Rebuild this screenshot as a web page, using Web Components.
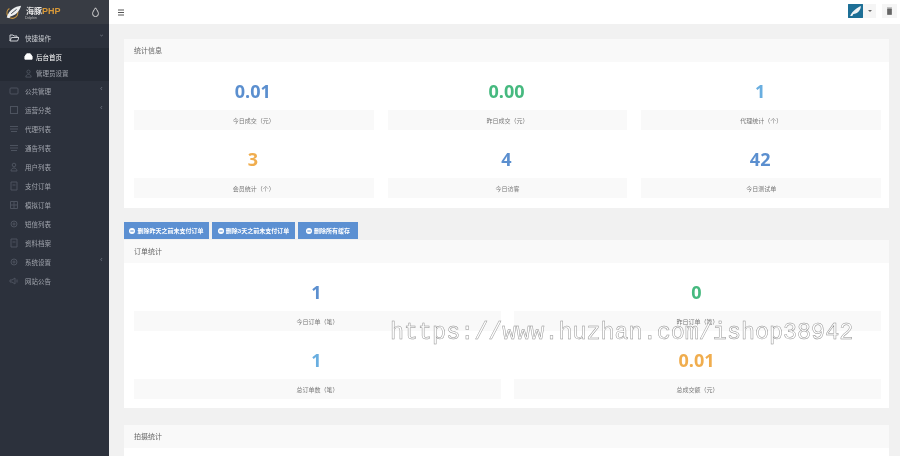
<!DOCTYPE html>
<html>
<head>
<meta charset="utf-8">
<style>
html,body{margin:0;padding:0;height:456px;overflow:hidden;background:#f1f1f1;}
body{font-family:"Liberation Sans","Noto Sans CJK SC",sans-serif;}
</style>
</head>
<body>
<admin-app>
  <side-nav slot="side"></side-nav>
  <top-bar slot="top"></top-bar>
  <panel-card title="统计信息" style="height:169px">
    <stat-grid cols="3">
      <stat-box value="0.01" label="今日成交（元）" color="#5b8fcf"></stat-box>
      <stat-box value="0.00" label="昨日成交（元）" color="#46b97f"></stat-box>
      <stat-box value="1" label="代理统计（个）" color="#69aee0"></stat-box>
      <stat-box value="3" label="会员统计（个）" color="#f0ad4e"></stat-box>
      <stat-box value="4" label="今日访客" color="#5b8fcf"></stat-box>
      <stat-box value="42" label="今日测试单" color="#5b8fcf"></stat-box>
    </stat-grid>
  </panel-card>
  <action-bar>
    <action-button style="width:85px">删除昨天之前未支付订单</action-button>
    <action-button style="width:83px">删除3天之前未支付订单</action-button>
    <action-button style="width:60px">删除所有缓存</action-button>
  </action-bar>
  <panel-card title="订单统计" style="height:168px">
    <stat-grid cols="2">
      <stat-box value="1" label="今日订单（笔）" color="#5b8fcf"></stat-box>
      <stat-box value="0" label="昨日订单（笔）" color="#46b97f"></stat-box>
      <stat-box value="1" label="总订单数（笔）" color="#69aee0"></stat-box>
      <stat-box value="0.01" label="总成交额（元）" color="#f0ad4e"></stat-box>
    </stat-grid>
  </panel-card>
  <panel-card title="拍摄统计" style="height:60px;margin-top:17px"></panel-card>
  <water-mark slot="over">https://www.huzhan.com/ishop38942</water-mark>
</admin-app>

<script>
const sansStack = '"Liberation Sans","Noto Sans CJK SC",sans-serif';

class AdminApp extends HTMLElement{
    constructor(){
        super();
        this.attachShadow({mode:'open'});
        this.shadowRoot.innerHTML = `
<style>
:host{display:grid;grid-template-columns:109px 1fr;grid-template-rows:24px 1fr;width:900px;height:456px;overflow:hidden;position:relative;background:#f1f1f1;filter:blur(.35px);}
.side{grid-row:1 / 3;}
main{padding:15px 11px 0 15px;overflow:hidden;}
</style>
<div class="side"><slot name="side"></slot></div>
<slot name="top"></slot>
<main><slot></slot></main>
<slot name="over"></slot>
`;
    }
}

class SideNav extends HTMLElement{
    constructor(){
        super();
        this.attachShadow({mode:'open'});
        const items = [
            ['box','公共管理',1],['tag','运营分类',1],['list','代理列表'],['list','通告列表'],
            ['user','用户列表'],['doc','支付订单'],['grid','模拟订单'],['gear','短信列表'],
            ['doc','资料档案'],['gear','系统设置',1],['horn','网站公告']
        ];
        const icons = {
            box:'<rect x="1" y="2" width="8" height="6" rx="1"/>',
            tag:'<rect x="1.5" y="1.5" width="7" height="7"/>',
            list:'<path d="M1 2.5h8M1 5h8M2 7.5h6"/>',
            user:'<circle cx="5" cy="3" r="1.8"/><path d="M2 9c0-4 6-4 6 0z"/>',
            doc:'<path d="M2 1h6v8H2zM3.5 4h3"/>',
            grid:'<path d="M1.5 1.5h7v7h-7zM1.5 5h7M5 1.5v7"/>',
            gear:'<circle cx="5" cy="5" r="3"/><circle cx="5" cy="5" r="1"/>',
            horn:'<path d="M1 4v2h2l3 2V2L3 4zM8 3.5v3"/>'
        };
        const row = ([ic,t,arrow]) => `<div class="row"><svg viewBox="0 0 10 10">${icons[ic]}</svg><span>${t}</span>${arrow?'<i>‹</i>':''}</div>`;
        this.shadowRoot.innerHTML = `
<style>
:host{display:flex;flex-direction:column;width:109px;height:456px;background:#2c313c;color:#a0a4ac;font:6.5px ${sansStack};}
.brand{height:24px;background:#383c44;display:flex;align-items:flex-start;padding:3px 0 0 4px;box-sizing:border-box;gap:2px;position:relative;}
.brand .logo{margin-right:2px;}
.brand b{font:bold 8px/10px ${sansStack};color:#e6e6e6;margin-top:3px;}
.brand b em{font-style:normal;color:#d99a3a;font-size:9px;}
.brand small{position:absolute;left:25px;top:15.500px;font-size:3.500px;line-height:4px;color:#bbb;}
.brand .drop{position:absolute;left:91px;top:7px;width:9px;height:10px;}
nav{padding-top:4px;}
.row{height:19px;display:flex;align-items:center;padding-left:9px;position:relative;}
.row svg{width:10px;height:10px;margin-right:6px;fill:none;stroke:#4d535f;stroke-width:1;flex:none;}
.row span{white-space:nowrap;}
.row i{position:absolute;left:100px;top:3px;font-style:normal;color:#6a707b;font-size:8px;}
.head{color:#c9ccd1;height:20px;}
.head svg{stroke:#c9ccd1;}
.head i{transform:rotate(-90deg);}
.sub{background:#252a34;}
.sub .row{padding-left:24px;height:17px;}
.sub .row + .row{height:16px;}
.sub svg{margin-right:3px;width:9px;height:9px;}
.on{color:#fff;}
.on svg{stroke:#fff;fill:#fff;}
</style>
<div class="brand">
  <svg class="logo" width="18" height="18" viewBox="0 0 20 20"><path d="M15 9a6 6 0 1 1-9-3" fill="none" stroke="#c8953f" stroke-width="1.3"/><path d="M3 16C6 7 12 4 19 3c-2 7-7 11-12 12l-1 2z" fill="#eceef0"/><path d="M8 12l6-5" stroke="#2c3340"/></svg>
  <b>海豚<em>PHP</em></b><small>Dolphin</small>
  <svg class="drop" viewBox="0 0 10 12"><path d="M5 1C3 4 1.5 6 1.5 8a3.5 3.5 0 0 0 7 0C8.500 6 7 4 5 1z" fill="none" stroke="#d8d8d8" stroke-width="1.2"/></svg>
</div>
<nav>
  <div class="row head"><svg viewBox="0 0 10 10"><path d="M1 8V2h3l1 1h3v1.500M1 8l1.500-3.500H10L8.500 8z"/></svg><span>快捷操作</span><i>‹</i></div>
  <div class="sub">
    <div class="row on"><svg viewBox="0 0 10 10"><path d="M1 5l2-3h4l2 3v3H1z"/></svg><span>后台首页</span></div>
    <div class="row"><svg viewBox="0 0 10 10"><circle cx="5" cy="3" r="1.800"/><path d="M2 9c0-4 6-4 6 0z"/></svg><span>管理员设置</span></div>
  </div>
  ${items.map(row).join('')}
</nav>
`;
    }
}

class TopBar extends HTMLElement{
    constructor(){
        super();
        this.attachShadow({mode:'open'});
        this.shadowRoot.innerHTML = `
<style>
:host{display:flex;align-items:center;height:24px;background:#fff;padding:0 3px 0 8px;box-sizing:border-box;}
.menu{width:8px;height:7px;}
.space{flex:1;}
.tools{display:flex;align-items:center;margin-top:-3px;}
.avatar{width:15px;height:14px;background:#1d6f96;border-radius:1px;display:block;}
.btn{height:14px;background:#f5f5f5;display:flex;align-items:center;justify-content:center;}
.caret{width:13px;margin-right:6px;}
.caret:after{content:"";border:2px solid transparent;border-top-color:#666;margin-top:2px;}
.trash{width:15px;}
</style>
<svg class="menu" viewBox="0 0 8 7"><path d="M1 1h6M1 3.500h6M1 6h6" stroke="#555" stroke-width="1"/></svg>
<div class="space"></div>
<div class="tools">
<svg class="avatar" viewBox="0 0 14 14" preserveAspectRatio="none"><rect width="14" height="14" fill="#1d6f96"/><path d="M2 12C4 7 8 4 12 2c0 4-3 8-7 8l-1 2z" fill="#eef2f4"/></svg>
<div class="btn caret"></div>
<div class="btn trash"><svg width="7" height="8" viewBox="0 0 7 8"><path d="M1 1h5M1.500 2h4v5.500h-4z" fill="#666" stroke="#666" stroke-width=".7"/></svg></div>
</div>
`;
    }
}

class PanelCard extends HTMLElement{
    constructor(){
        super();
        this.attachShadow({mode:'open'});
        this.shadowRoot.innerHTML = `
<style>
:host{display:flex;flex-direction:column;width:765px;background:#fff;box-sizing:border-box;overflow:hidden;}
header{height:23px;flex:none;background:#f9f9f9;display:flex;align-items:center;padding:0 0 2px 10px;box-sizing:border-box;font:7px ${sansStack};color:#666;}
.body{flex:1;padding:0 8px 0 10px;}
</style>
<header></header>
<div class="body"><slot></slot></div>
`;
        this.shadowRoot.querySelector('header').textContent = this.getAttribute('title');
        this.removeAttribute('title');
    }
}

class StatGrid extends HTMLElement{
    constructor(){
        super();
        this.attachShadow({mode:'open'});
        const cols = this.getAttribute('cols');
        this.shadowRoot.innerHTML = `
<style>
:host{display:grid;grid-template-columns:repeat(${cols},1fr);column-gap:${cols=='3'?14:13}px;}
</style>
<slot></slot>
`;
    }
}

class StatBox extends HTMLElement{
    constructor(){
        super();
        this.attachShadow({mode:'open'});
        this.shadowRoot.innerHTML = `
<style>
:host{display:flex;flex-direction:column;height:68px;min-width:0;}
.num{height:48px;display:flex;align-items:center;justify-content:center;padding:10px 2px 0 0;box-sizing:border-box;font:bold 18px "Open Sans",${sansStack};}
.lab{height:20px;background:#f9f9f9;display:flex;align-items:center;justify-content:center;font:6px ${sansStack};color:#777;}
</style>
<div class="num"></div>
<div class="lab"></div>
`;
        const num = this.shadowRoot.querySelector('.num');
        num.textContent = this.getAttribute('value');
        num.style.color = this.getAttribute('color');
        this.shadowRoot.querySelector('.lab').textContent = this.getAttribute('label');
    }
}

class ActionBar extends HTMLElement{
    constructor(){
        super();
        this.attachShadow({mode:'open'});
        this.shadowRoot.innerHTML = `
<style>
:host{display:flex;gap:3px;height:18px;margin-top:14px;}
</style>
<slot></slot>
`;
    }
}

class ActionButton extends HTMLElement{
    constructor(){
        super();
        this.attachShadow({mode:'open'});
        this.shadowRoot.innerHTML = `
<style>
:host{display:flex;align-items:center;justify-content:center;height:17px;background:#5c90d2;color:#fff;font:bold 6px ${sansStack};white-space:nowrap;gap:2px;box-sizing:border-box;}
svg{width:6px;height:6px;flex:none;}
</style>
<svg viewBox="0 0 6 6"><circle cx="3" cy="3" r="3" fill="#fff"/><rect x="1.300" y="2.500" width="3.400" height="1" fill="#5c90d2"/></svg>
<slot></slot>
`;
    }
}

class WaterMark extends HTMLElement{
    constructor(){
        super();
        this.attachShadow({mode:'open'});
        this.shadowRoot.innerHTML = `
<style>
:host{position:absolute;left:390px;top:320px;font:23.400px "Liberation Mono",monospace;color:rgba(255,255,255,.8);-webkit-text-stroke:.45px #8c8c8c;white-space:nowrap;}
</style>
<slot></slot>
`;
    }
}

customElements.define('admin-app',AdminApp);
customElements.define('side-nav',SideNav);
customElements.define('top-bar',TopBar);
customElements.define('panel-card',PanelCard);
customElements.define('stat-grid',StatGrid);
customElements.define('stat-box',StatBox);
customElements.define('action-bar',ActionBar);
customElements.define('action-button',ActionButton);
customElements.define('water-mark',WaterMark);
</script>
</body>
</html>
